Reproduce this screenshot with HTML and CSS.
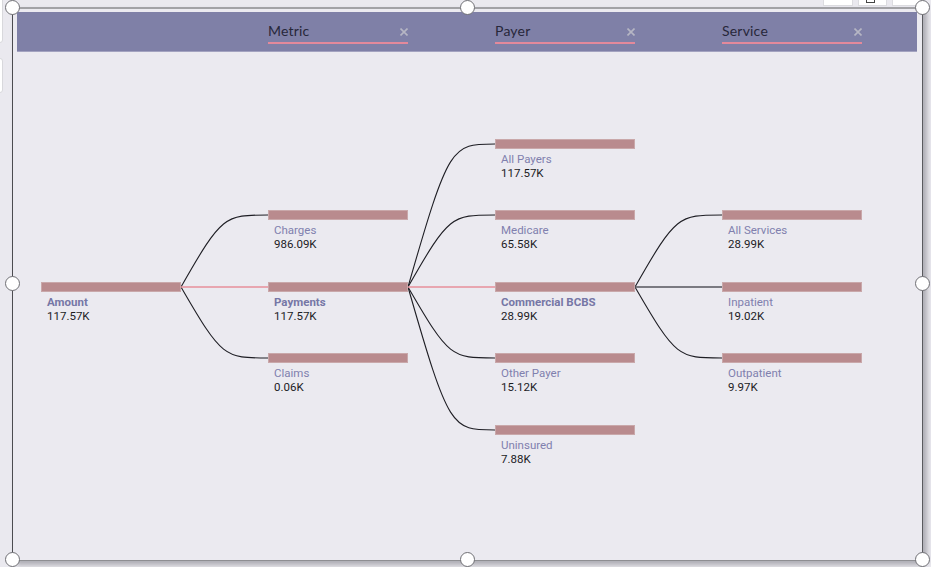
FILE: index.html
```html
<!DOCTYPE html>
<html lang="en">
<head>
<meta charset="utf-8">
<title>Decomposition tree</title>
<link rel="stylesheet" href="styles.css">
</head>
<body>
<div class="side-tab side-tab-a"></div>
<div class="side-tab side-tab-b"></div>
<div class="top-btn top-btn-a"></div>
<div class="top-btn top-btn-b"><span class="top-btn-icon"></span></div>
<div class="top-btn top-btn-c"></div>

<div class="frame">
  <div class="header">
    <div class="filter"><span class="filter-name">Metric</span><svg class="filter-x" viewBox="0 0 8 8" width="8" height="8"><path d="M0.5 0.5 L7.5 7.5 M7.5 0.5 L0.5 7.5"/></svg></div>
    <div class="filter"><span class="filter-name">Payer</span><svg class="filter-x" viewBox="0 0 8 8" width="8" height="8"><path d="M0.5 0.5 L7.5 7.5 M7.5 0.5 L0.5 7.5"/></svg></div>
    <div class="filter"><span class="filter-name">Service</span><svg class="filter-x" viewBox="0 0 8 8" width="8" height="8"><path d="M0.5 0.5 L7.5 7.5 M7.5 0.5 L0.5 7.5"/></svg></div>
  </div>

  <svg class="links" viewBox="13 9 909 552" width="909" height="552">
    <g fill="none" stroke="#1e1e24" stroke-width="1.1">
      <path d="M181 287 C222 215 224.5 215 268 215"/>
      <path d="M181 287 C222 358 224.5 358 268 358"/>
      <path d="M408 287 C449 144 451.5 144 495 144"/>
      <path d="M408 287 C449 215 451.5 215 495 215"/>
      <path d="M408 287 C449 358 451.5 358 495 358"/>
      <path d="M408 287 C449 430 451.5 430 495 430"/>
      <path d="M635 287 C676 215 678.5 215 722 215"/>
      <path d="M635 287 C676 358 678.5 358 722 358"/>
    </g>
    <path d="M181 287 L268 287 M408 287 L495 287" stroke="#e8909a" stroke-width="1.5" fill="none"/>
    <path d="M635 287 L722 287" stroke="#55555c" stroke-width="1.5" fill="none"/>
  </svg>

  <div class="tree">
    <div class="node c1 r3"><div class="bar"></div><div class="label bold">Amount</div><div class="value">117.57K</div></div>

    <div class="node c2 r2"><div class="bar"></div><div class="label">Charges</div><div class="value">986.09K</div></div>
    <div class="node c2 r3"><div class="bar"></div><div class="label bold">Payments</div><div class="value">117.57K</div></div>
    <div class="node c2 r4"><div class="bar"></div><div class="label">Claims</div><div class="value">0.06K</div></div>

    <div class="node c3 r1"><div class="bar"></div><div class="label">All Payers</div><div class="value">117.57K</div></div>
    <div class="node c3 r2"><div class="bar"></div><div class="label">Medicare</div><div class="value">65.58K</div></div>
    <div class="node c3 r3"><div class="bar"></div><div class="label bold">Commercial BCBS</div><div class="value">28.99K</div></div>
    <div class="node c3 r4"><div class="bar"></div><div class="label">Other Payer</div><div class="value">15.12K</div></div>
    <div class="node c3 r5"><div class="bar"></div><div class="label">Uninsured</div><div class="value">7.88K</div></div>

    <div class="node c4 r2"><div class="bar"></div><div class="label">All Services</div><div class="value">28.99K</div></div>
    <div class="node c4 r3"><div class="bar"></div><div class="label">Inpatient</div><div class="value">19.02K</div></div>
    <div class="node c4 r4"><div class="bar"></div><div class="label">Outpatient</div><div class="value">9.97K</div></div>
  </div>

  <span class="handle h-tl"></span>
  <span class="handle h-tm"></span>
  <span class="handle h-tr"></span>
  <span class="handle h-ml"></span>
  <span class="handle h-mr"></span>
  <span class="handle h-bl"></span>
  <span class="handle h-bm"></span>
  <span class="handle h-br"></span>
</div>
</body>
</html>
```

FILE: styles.css
```css
* { box-sizing: border-box; }

html, body {
  margin: 0;
  padding: 0;
  width: 931px;
  height: 567px;
  overflow: hidden;
  background: #eae9ef;
  font-family: "Roboto", "Noto Sans", sans-serif;
}

body {
  position: relative;
  padding: 7px 0 0 12px;
}

.side-tab {
  position: absolute;
  left: -4px;
  width: 7px;
  background: #ffffff;
  border: 1px solid #d8d8dc;
  border-radius: 3px;
}
.side-tab-a { top: -4px; height: 47px; }
.side-tab-b { top: 58px; height: 35px; }

.top-btn {
  position: absolute;
  top: -4px;
  height: 10px;
  background: #ffffff;
  border: 1px solid #dcdce0;
}
.top-btn-a { left: 823px; width: 30px; }
.top-btn-b { left: 858px; width: 29px; }
.top-btn-c { left: 892px; width: 30px; }
.top-btn-icon {
  position: absolute;
  left: 7px;
  top: 1px;
  width: 9px;
  height: 5px;
  border: 1px solid #444;
  border-top: none;
}

.frame {
  position: relative;
  width: 911px;
  height: 554px;
  background: #ebeaf0;
  border-top: 2px solid #a2a2a6;
  border-left: 1px solid #4c4c50;
  border-right: 1px solid #5a5a5e;
  border-bottom: 1px solid #8e8e92;
  box-shadow: 4px 4px 5px rgba(60, 60, 70, 0.35);
}

.header {
  height: 40px;
  margin: 3px 5px 0 4px;
  background: #7f80a7;
  border-bottom: 1px solid #a3a3c0;
  display: flex;
  align-items: flex-end;
  gap: 87px;
  padding: 0 0 7px 251px;
}

.filter {
  width: 140px;
  display: flex;
  justify-content: space-between;
  align-items: center;
  border-bottom: 2px solid #e3899b;
  padding: 0 0 2px 0;
  line-height: 18px;
}

.filter-name {
  font-family: "Lato", "Noto Sans", sans-serif;
  font-size: 14px;
  color: #27273a;
  letter-spacing: 0.2px;
}

.filter-x {
  fill: none;
  stroke: #b6b6c4;
  stroke-width: 1.6;
  margin-top: 2px;
}

.links {
  position: absolute;
  left: 0;
  top: 0;
}

.tree {
  position: relative;
  display: grid;
  grid-template-columns: repeat(4, 140px);
  grid-template-rows: 71px 72px 71px 72px 71px;
  column-gap: 87px;
  padding: 87px 0 0 28px;
}

.node { display: flex; flex-direction: column; }
.c1 { grid-column: 1; }
.c2 { grid-column: 2; }
.c3 { grid-column: 3; }
.c4 { grid-column: 4; }
.r1 { grid-row: 1; }
.r2 { grid-row: 2; }
.r3 { grid-row: 3; }
.r4 { grid-row: 4; }
.r5 { grid-row: 5; }

.bar {
  height: 10px;
  background: #b98b8e;
  border: 1px solid #c9a8aa;
}

.label, .value {
  padding-left: 6px;
  font-size: 11.5px;
  line-height: 14px;
  white-space: nowrap;
}

.label {
  margin-top: 3px;
  color: #8080ae;
}

.label.bold {
  font-weight: 700;
  color: #7677a6;
}

.value {
  color: #1b1b1f;
}

.handle {
  position: absolute;
  width: 15px;
  height: 15px;
  border-radius: 50%;
  background: #ffffff;
  border: 1px solid #6f6f74;
}
.h-tl { left: -8px;  top: -9px; }
.h-tm { left: 447px; top: -9px; }
.h-tr { left: 902px; top: -9px; }
.h-ml { left: -8px;  top: 267px; }
.h-mr { left: 902px; top: 267px; }
.h-bl { left: -8px;  top: 543px; }
.h-bm { left: 447px; top: 543px; }
.h-br { left: 902px; top: 543px; }
```
